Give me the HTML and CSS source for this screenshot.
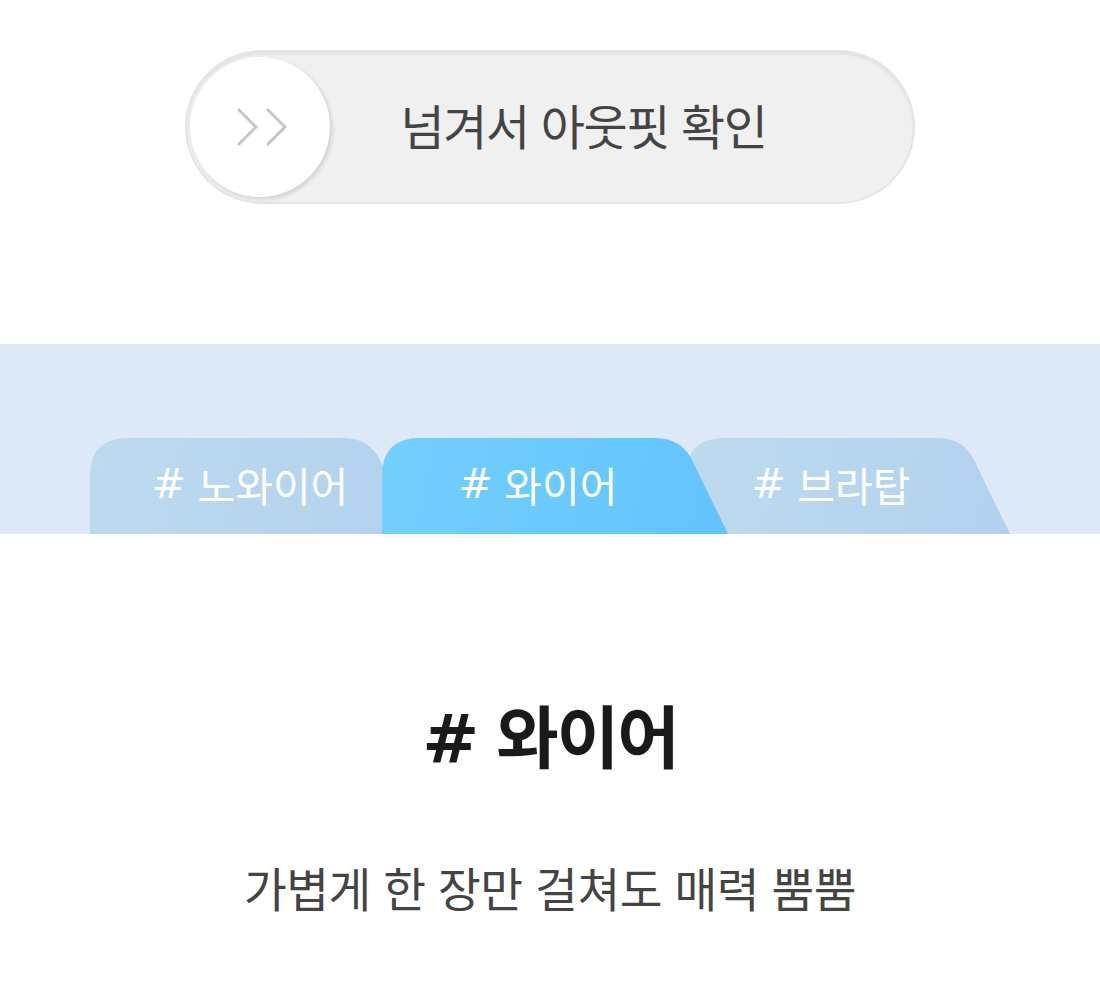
FILE: index.html
```html
<!DOCTYPE html>
<html lang="ko">
<head>
    <meta charset="UTF-8">
    <meta name="viewport" content="width=device-width, initial-scale=1.0">
    <title>와이어 아웃핏</title>
    <link rel="stylesheet" href="styles.css">
</head>
<body>
    <div class="swipe-wrap">
        <div class="swipe">
            <div class="knob">
                <svg width="52" height="40" viewBox="0 0 52 40">
                    <polyline points="2,2 20,20 2,38" />
                    <polyline points="31,2 49,20 31,38" />
                </svg>
            </div>
            <span class="swipe-label">넘겨서 아웃핏 확인</span>
        </div>
    </div>

    <div class="tab-band">
        <div class="tabs">
            <div class="tab tab-1"><span class="hash">#</span>&nbsp;노와이어</div>
            <div class="tab tab-2 active"><span class="hash">#</span>&nbsp;와이어</div>
            <div class="tab tab-3"><span class="hash">#</span>&nbsp;브라탑</div>
        </div>
    </div>

    <div class="content">
        <h2><span class="hash">#</span>&nbsp;와이어</h2>
        <p>가볍게 한 장만 걸쳐도 매력 뿜뿜</p>
    </div>
</body>
</html>
```

FILE: styles.css
```css
body {
    margin: 0;
    background-color: #fff;
    font-family: "Noto Sans CJK KR", "Noto Sans", sans-serif;
}
.hash {
    font-family: "DejaVu Sans", sans-serif;
    letter-spacing: 0;
}
.swipe-wrap {
    padding-top: 50px;
    display: flex;
    justify-content: center;
}
.swipe {
    width: 730px;
    height: 154px;
    box-sizing: border-box;
    border: 2px solid #e4e4e4;
    border-radius: 77px;
    background-color: #f0f0f0;
    box-shadow: inset 0 2px 3px rgba(0, 0, 0, 0.07);
    display: flex;
    align-items: center;
    padding-left: 3px;
}
.knob {
    width: 140px;
    height: 140px;
    border-radius: 50%;
    background-color: #fff;
    box-shadow: 2px 2px 4px rgba(0, 0, 0, 0.14);
    display: flex;
    align-items: center;
    justify-content: center;
    flex-shrink: 0;
}
.knob svg {
    margin-left: 4px;
}
.knob polyline {
    fill: none;
    stroke: #c6c6c6;
    stroke-width: 3;
}
.swipe-label {
    flex: 1;
    text-align: center;
    padding-right: 76px;
    padding-bottom: 6px;
    font-size: 48px;
    letter-spacing: -1.4px;
    color: #444;
}
.tab-band {
    margin-top: 140px;
    height: 190px;
    background-color: #dde9f6;
    display: flex;
    align-items: flex-end;
}
.tabs {
    display: flex;
    padding-left: 90px;
}
.tab {
    height: 96px;
    display: flex;
    align-items: center;
    justify-content: center;
    box-sizing: border-box;
    padding-right: 34px;
    padding-bottom: 4px;
    font-size: 41px;
    color: #fff;
    background: linear-gradient(100deg, #bddaee, #b1d1ee);
}
.tab-1 {
    width: 326px;
    padding-right: 6px;
    clip-path: path("M0,96 L0,38 Q0,0 38,0 L254,0 Q280,0 291,24 L326,96 Z");
    z-index: 1;
}
.tab-2 {
    width: 346px;
    margin-left: -34px;
    clip-path: path("M0,96 L0,38 Q0,0 38,0 L274,0 Q300,0 311,24 L346,96 Z");
    z-index: 3;
}
.tab-3 {
    width: 324px;
    margin-left: -42px;
    clip-path: path("M0,96 L0,38 Q0,0 38,0 L252,0 Q278,0 289,24 L324,96 Z");
    z-index: 2;
}
.tab.active {
    background: linear-gradient(100deg, #74cffc, #62c3fb);
}
.content {
    text-align: center;
    padding-top: 155px;
}
.content h2 {
    margin: 0;
    font-size: 68px;
    font-weight: 700;
    letter-spacing: -2px;
    line-height: 90px;
    color: #1a1a1a;
}
.content p {
    margin: 72px 0 0;
    font-size: 46.5px;
    letter-spacing: -0.5px;
    line-height: 60px;
    color: #444;
}
```
